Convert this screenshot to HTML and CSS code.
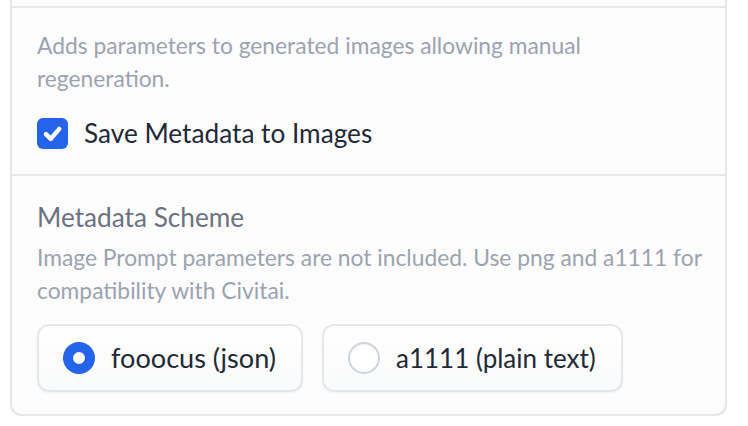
FILE: index.html
```html
<!DOCTYPE html>
<html lang="en">
<head>
<meta charset="utf-8">
<title>Metadata settings</title>
<link rel="stylesheet" href="styles.css">
</head>
<body>
<div class="panel">
  <div class="section section-top"></div>
  <div class="section section-save">
    <p class="info">Adds parameters to generated images allowing manual regeneration.</p>
    <label class="checkbox-row">
      <span class="checkbox">
        <svg viewBox="0 0 16 16" width="31" height="31"><path d="M4.6 8.3 L7.1 10.8 L11.5 5.6" fill="none" stroke="#fff" stroke-width="2.3" stroke-linecap="round" stroke-linejoin="round"/></svg>
      </span>
      <span class="checkbox-label">Save Metadata to Images</span>
    </label>
  </div>
  <div class="section section-scheme">
    <div class="label">Metadata Scheme</div>
    <p class="info info-scheme">Image Prompt parameters are not included. Use png and a1111 for compatibility with Civitai.</p>
    <div class="radio-group">
      <label class="radio-option">
        <span class="radio radio-on"></span>
        <span class="radio-label radio-label-json">fooocus (json)</span>
      </label>
      <label class="radio-option">
        <span class="radio"></span>
        <span class="radio-label radio-label-plain">a1111 (plain text)</span>
      </label>
    </div>
  </div>
</div>
</body>
</html>
```
FILE: styles.css
```css
* { box-sizing: border-box; }
html, body { margin: 0; padding: 0; background: #ffffff; }
body { font-family: "Lato", "Noto Sans", sans-serif; }

.panel {
  margin-left: 10px;
  width: 717px;
  border: 2px solid #e5e7eb;
  border-top: none;
  border-radius: 0 0 12px 12px;
  background: #fdfdfe;
  box-shadow: 0 1px 2px rgba(0,0,0,0.04);
}

.section { border-bottom: 2px solid #e5e7eb; }
.section:last-child { border-bottom: none; }
.section-top { height: 8px; }

.section-save { padding: 21px 12px 25px 25px; }
.section-scheme { padding: 24px 12px 22px 25px; }

.info {
  margin: 0;
  font-size: 22.8px;
  line-height: 33px;
  color: #9ca3af;
}

.checkbox-row {
  display: flex;
  align-items: center;
  gap: 16px;
  margin-top: 22px;
}
.checkbox {
  width: 31px;
  height: 31px;
  border-radius: 6px;
  background: #2563eb;
  display: flex;
}
.checkbox-label {
  font-size: 26.2px;
  line-height: 32px;
  color: #1f2937;
}

.label {
  font-size: 26.2px;
  line-height: 34px;
  color: #6b7280;
}
.info-scheme { margin-top: 7px; }

.radio-group {
  display: flex;
  gap: 19px;
  margin-top: 17px;
}
.radio-option {
  display: flex;
  align-items: center;
  gap: 16px;
  height: 68px;
  padding: 0 25px 0 24px;
  border: 2px solid #e5e7eb;
  border-radius: 12px;
  background: linear-gradient(#ffffff, #f9fafb);
  box-shadow: 0 1px 2px rgba(0,0,0,0.05);
}
.radio {
  width: 32px;
  height: 32px;
  border-radius: 50%;
  border: 2px solid #d1d5db;
  background: #ffffff;
  box-shadow: inset 0 1px 2px rgba(0,0,0,0.06);
}
.radio-on {
  border: 10px solid #2563eb;
  background: #ffffff;
  box-shadow: none;
}
.radio-label {
  line-height: 32px;
  color: #1f2937;
}
.radio-label-json { font-size: 27.1px; }
.radio-label-plain { font-size: 26px; }
```
